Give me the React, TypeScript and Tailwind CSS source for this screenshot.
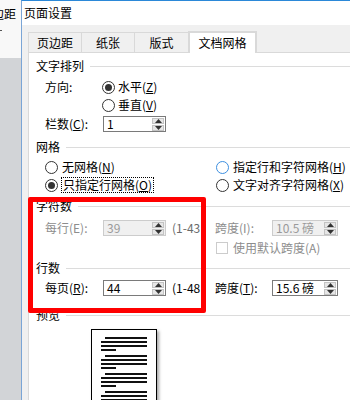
import React from "react";

function Radio({ checked = false, hover = false }: { checked?: boolean; hover?: boolean }) {
  return (
    <span
      className={`w-[13px] h-[13px] shrink-0 rounded-full border bg-white flex items-center justify-center ${
        hover ? "border-[#3d8fe0]" : "border-[#333333]"
      }`}
    >
      {checked && <span className="w-[7px] h-[7px] rounded-full bg-[#333333]" />}
    </span>
  );
}

function Arrow({ up }: { up: boolean }) {
  return (
    <svg width="7" height="4" viewBox="0 0 7 4">
      {up ? <polygon points="0,4 7,4 3.5,0" fill="#333" /> : <polygon points="0,0 7,0 3.5,4" fill="#333" />}
    </svg>
  );
}

function Spin({ value, disabled = false, wide = false }: { value: string; disabled?: boolean; wide?: boolean }) {
  return (
    <div
      className={`flex h-[16px] border shrink-0 ${wide ? "w-[66px]" : "w-[63px]"} ${
        disabled ? "border-[#cccccc] bg-[#f0f0f0] text-[#9a9a9a]" : "border-[#7a7a7a] bg-white text-black"
      }`}
    >
      <div className="flex-1 pl-[3px] leading-[14px] whitespace-nowrap">{value}</div>
      <div className="w-[14px] flex flex-col p-[1px] gap-px">
        <div className="flex-1 bg-[#e6e6e6] border border-[#c3c3c3] flex items-center justify-center">
          <Arrow up />
        </div>
        <div className="flex-1 bg-[#e6e6e6] border border-[#c3c3c3] flex items-center justify-center">
          <Arrow up={false} />
        </div>
      </div>
    </div>
  );
}

function Header({ label }: { label: string }) {
  return (
    <div className="flex items-center h-[16px]">
      <span className="whitespace-nowrap">{label}</span>
      <div className="flex-1 h-px bg-[#dcdcdc] ml-[6px]" />
    </div>
  );
}

function Para() {
  return (
    <div className="flex flex-col gap-[2px]">
      <div className="h-[2px] w-[42px] ml-[13px] bg-[#111]" />
      <div className="h-[2px] w-[46px] ml-[9px] bg-[#111]" />
      <div className="h-[2px] w-[46px] ml-[9px] bg-[#111]" />
      <div className="h-[2px] w-[15px] ml-[9px] bg-[#111]" />
    </div>
  );
}

export default function App() {
  return (
    <div className="relative w-[350px] h-[400px] overflow-hidden flex bg-white text-[12px] leading-[16px] text-black font-['Noto_Sans_CJK_SC','Noto_Sans',sans-serif]">
      {/* left strip (underlying window) */}
      <div className="w-[21px] shrink-0 flex flex-col">
        <div className="h-[58px] shrink-0 bg-[#f8f8f8] pt-[6px] overflow-hidden">
          <div className="ml-[-8px] whitespace-nowrap">边距</div>
          <div className="mt-[8px] w-[2px] h-px bg-[#555]" />
        </div>
        <div className="flex-1 bg-[#d2d4d7]" />
      </div>

      {/* dialog */}
      <div className="flex-1 flex flex-col border-l border-l-[#7aa5d6] border-t border-t-[#2b88d8] min-w-0 overflow-hidden">
        <div className="h-[24px] shrink-0 bg-white pl-[2px] flex items-center">页面设置</div>
        <div className="flex-1 bg-[#f0f0f0] pt-[6px] pl-[6px]">
          {/* tabs */}
          <div className="flex items-end h-[21px] relative z-10">
            <div className="w-[54px] h-[20px] border border-[#d9d9d9] border-b-0 bg-[#f0f0f0] flex items-center justify-center">页边距</div>
            <div className="w-[53px] h-[20px] border-r border-t border-[#d9d9d9] bg-[#f0f0f0] flex items-center justify-center">纸张</div>
            <div className="w-[53px] h-[20px] border-t border-[#d9d9d9] bg-[#f0f0f0] flex items-center justify-center">版式</div>
            <div className="w-[69px] h-[22px] mb-[-1px] border-2 border-b-0 border-[#d9d9d9] bg-white flex items-center justify-center">文档网格</div>
          </div>
          {/* panel */}
          <div className="h-[400px] bg-white border border-[#d9d9d9] border-r-0 pl-[7px] pt-[5px]">
            <Header label="文字排列" />
            <div className="flex items-center h-[16px] mt-[5px]">
              <span className="ml-[9px] w-[57px]">方向:</span>
              <Radio checked />
              <span className="ml-[3px]">
                水平(<u>Z</u>)
              </span>
            </div>
            <div className="flex items-center h-[16px] mt-[2px] pl-[66px]">
              <Radio />
              <span className="ml-[3px]">
                垂直(<u>V</u>)
              </span>
            </div>
            <div className="flex items-center h-[16px] mt-[3px]">
              <span className="ml-[9px] w-[58px]">
                栏数(<u>C</u>):
              </span>
              <Spin value="1" />
            </div>

            <div className="mt-[7px]">
              <Header label="网格" />
            </div>
            <div className="flex items-center h-[16px] mt-[4px]">
              <div className="w-[179px] flex items-center pl-[9px]">
                <Radio />
                <span className="ml-[4px]">
                  无网格(<u>N</u>)
                </span>
              </div>
              <div className="flex items-center pl-[1px]">
                <Radio hover />
                <span className="ml-[4px] whitespace-nowrap">
                  指定行和字符网格(<u>H</u>)
                </span>
              </div>
            </div>
            <div className="flex items-center h-[16px] mt-[2px]">
              <div className="w-[179px] flex items-center pl-[9px]">
                <Radio checked />
                <span className="ml-[3px] border border-dotted border-[#000] px-[1px] leading-[14px]">
                  只指定行网格(<u>O</u>)
                </span>
              </div>
              <div className="flex items-center pl-[1px]">
                <Radio />
                <span className="ml-[4px] whitespace-nowrap">
                  文字对齐字符网格(<u>X</u>)
                </span>
              </div>
            </div>

            <div className="mt-[5px]">
              <Header label="字符数" />
            </div>
            <div className="flex items-center h-[16px] mt-[6px]">
              <div className="w-[179px] flex items-center text-[#8d8d8d]">
                <span className="ml-[9px] w-[58px]">每行(E):</span>
                <Spin value="39" disabled />
                <span className="ml-[6px] text-[#6a6a6a] whitespace-nowrap">(1-43</span>
              </div>
              <div className="flex items-center text-[#8d8d8d]">
                <span className="w-[57px]">跨度(I):</span>
                <Spin value="10.5 磅" disabled wide />
              </div>
            </div>
            <div className="flex items-center h-[16px] mt-[4px] pl-[180px] text-[#8d8d8d]">
              <span className="w-[12px] h-[12px] border border-[#cccccc] bg-white" />
              <span className="ml-[5px] whitespace-nowrap">使用默认跨度(A)</span>
            </div>

            <div className="mt-[4px]">
              <Header label="行数" />
            </div>
            <div className="flex items-center h-[16px] mt-[4px]">
              <div className="w-[179px] flex items-center">
                <span className="ml-[9px] w-[58px]">
                  每页(<u>R</u>):
                </span>
                <Spin value="44" />
                <span className="ml-[6px] whitespace-nowrap">(1-48</span>
              </div>
              <div className="flex items-center">
                <span className="w-[57px]">
                  跨度(<u>T</u>):
                </span>
                <Spin value="15.6 磅" wide />
              </div>
            </div>

            <div className="mt-[11px]">
              <Header label="预览" />
            </div>
            <div className="ml-[55px] mt-[6px] w-[66px] h-[90px] bg-white border border-black shadow-[2px_2px_3px_rgba(0,0,0,0.35)] pt-[7px] flex flex-col gap-[4px]">
              <Para />
              <Para />
              <Para />
              <Para />
            </div>
          </div>
        </div>
      </div>

      {/* red annotation box */}
      <div className="absolute left-[28px] top-[197px] w-[178px] h-[116px] border-[5px] border-[#ff0000] rounded-[2px] pointer-events-none" />
    </div>
  );
}
